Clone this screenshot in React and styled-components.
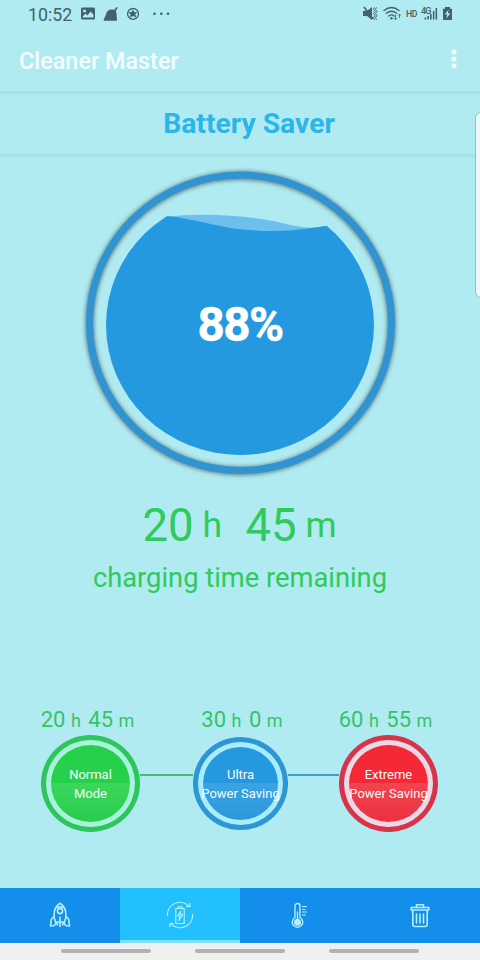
import React from "react";
import styled, { createGlobalStyle } from "styled-components";

const GlobalStyle = createGlobalStyle`
  * { box-sizing: border-box; }
  html, body { margin: 0; padding: 0; background: #b0ebf2; }
  body { font-family: Roboto, "Liberation Sans", sans-serif; }
  svg { display: block; flex: none; }
`;

const Screen = styled.main`
  position: relative;
  width: 480px;
  height: 960px;
  overflow: hidden;
  display: flex;
  flex-direction: column;
  background: #b0ebf2;
`;

const StatusBar = styled.header`
  height: 28px;
  padding: 0 27px 0 28px;
  display: flex;
  align-items: center;
  justify-content: space-between;
  color: #42616a;
`;

const StatusGroup = styled.div`
  display: flex;
  align-items: center;
`;

const Clock = styled.span`
  width: 53px;
  padding-top: 1px;
  font-size: 17.8px;
  line-height: 28px;
`;

const AppBar = styled.div`
  height: 64px;
  padding: 0 21px 2px 19px;
  display: flex;
  align-items: center;
  justify-content: space-between;
  border-bottom: 1px solid #a6dee5;
  box-shadow: 0 1px 2px rgba(60, 120, 130, 0.15);
`;

const AppTitle = styled.h1`
  margin: 0;
  padding-top: 4px;
  font-size: 23.4px;
  font-weight: 500;
  line-height: 60px;
  color: #f4fdfe;
`;

const SectionBar = styled.div`
  height: 63px;
  padding-left: 18px;
  display: flex;
  align-items: center;
  justify-content: center;
  border-bottom: 1px solid #a6dee5;
  box-shadow: 0 1px 2px rgba(60, 120, 130, 0.15);
`;

const SectionTitle = styled.h2`
  margin: 0;
  padding-top: 1px;
  font-size: 28.3px;
  font-weight: 700;
  line-height: 61px;
  color: #2cb5e8;
`;

const EdgeHandle = styled.div`
  position: absolute;
  top: 112px;
  right: -8px;
  width: 13px;
  height: 186px;
  border: 1px solid #98bcc2;
  border-radius: 6px;
  background: #e9f9fc;
`;

const Gauge = styled.section`
  position: relative;
  height: 336px;
`;

const GaugeValue = styled.div`
  position: absolute;
  inset: 0 0 0 0;
  display: flex;
  justify-content: center;
  padding-top: 142px;
  font-size: 47.5px;
  font-weight: 700;
  line-height: 56px;
  letter-spacing: -1.5px;
  -webkit-text-stroke: 0.5px #fff;
  color: #fff;
`;

const Remaining = styled.section`
  height: 214px;
  display: flex;
  flex-direction: column;
  align-items: center;
  color: #2fca5b;
`;

const BigTime = styled.div`
  height: 68px;
  display: flex;
  align-items: center;
`;

const BigNumber = styled.span`
  width: ${(p) => p.$w}px;
  padding-top: 2px;
  font-size: 45.5px;
  line-height: 66px;
`;

const BigUnit = styled.span`
  width: ${(p) => p.$w}px;
  font-size: 35.5px;
  line-height: 68px;
`;

const Caption = styled.div`
  margin-top: 3px;
  font-size: 27.3px;
  line-height: 32px;
  white-space: nowrap;
`;

const Modes = styled.section`
  height: 183px;
  padding-left: 39px;
  display: flex;
  align-items: flex-start;
`;

const ModeItem = styled.div`
  width: ${(p) => p.$w}px;
  flex: none;
  display: flex;
  flex-direction: column;
  align-items: center;
`;

const ModeTime = styled.div`
  height: 30px;
  margin-left: ${(p) => p.$shift}px;
  display: flex;
  align-items: baseline;
  justify-content: center;
  font-size: 22px;
  line-height: 30px;
  white-space: nowrap;
  color: #35c464;
`;

const ModeUnit = styled.span`
  margin: 0 ${(p) => (p.$last ? 0 : 7.5)}px 0 5.5px;
  font-size: 18px;
`;

const Dial = styled.button`
  width: ${(p) => p.$w}px;
  height: ${(p) => p.$h}px;
  margin: ${(p) => p.$top}px 0 0;
  padding: 5px;
  border: 0;
  border-radius: 50%;
  background: ${(p) => p.$ring};
  font-family: inherit;
`;

const DialGap = styled.span`
  display: block;
  width: 100%;
  height: 100%;
  padding: 5px;
  border-radius: 50%;
  background: ${(p) => p.$gap};
`;

const DialFace = styled.span`
  width: 100%;
  height: 100%;
  display: flex;
  align-items: center;
  justify-content: center;
  border-radius: 50%;
  background: ${(p) => p.$face};
`;

const DialLabel = styled.span`
  flex: none;
  margin-top: 2px;
  color: #f4fdfa;
  font-size: 13px;
  line-height: 18.5px;
  text-align: center;
  white-space: nowrap;
`;

const Connector = styled.div`
  width: ${(p) => p.$w}px;
  height: 2px;
  flex: none;
  margin: 69px -2px 0;
  background: ${(p) => p.$color};
`;

const TabBar = styled.nav`
  height: 55px;
  display: grid;
  grid-template-columns: repeat(4, 1fr);
`;

const Tab = styled.button`
  padding: 2px 0 0;
  border: 0;
  border-bottom: 3px solid ${(p) => (p.$active ? "#79e1fb" : "#138eea")};
  background: ${(p) => (p.$active ? "#22c0fc" : "#138eea")};
  display: flex;
  align-items: center;
  justify-content: center;
  color: #b5f1f7;
`;

const SystemBar = styled.footer`
  height: 17px;
  padding: 6px 61px 0;
  display: flex;
  justify-content: space-between;
  background: #f0f0f0;
`;

const Pill = styled.span`
  width: 90px;
  height: 4px;
  border-radius: 2px;
  background: #b2b2b2;
`;

const LeftStatusIcons = () => (
  <svg width="92" height="20" viewBox="81 4 92 20" fill="#42616a">
    <path fillRule="evenodd" d="M82.500 7.500h11q1.500 0 1.500 1.500v9q0 1.500-1.500 1.500h-11q-1.500 0-1.500-1.500v-9q0-1.500 1.500-1.500zM82.700 17.500h10.800v-3l-3-3-3 4-2-2-2.800 3zM84.500 9.500a1.500 1.500 0 1 0 .1 0z" />
    <path d="M103.500 20.700q1.500-4.500 3-7.200h10l.5 7.200zM106 13.600q2-4.800 6.500-4.100l1.500.5 2.500-3 1.300.8-2 3 .6 2.800z" />
    <circle cx="133" cy="13.900" r="5.400" fill="none" stroke="#42616a" strokeWidth="1.300" />
    <path d="M133 9.500l1.200 2.800 3-.2-2 2.400 1.200 3.100-3.400-1.500-3.200 1.700.8-3.400-2.300-2.200 3.300-.2z" />
    <circle cx="154.500" cy="13.800" r="1.300" /><circle cx="161.300" cy="13.800" r="1.300" /><circle cx="168" cy="13.800" r="1.300" />
  </svg>
);

const StatusText = styled.text`
  font-family: Roboto, sans-serif;
  font-weight: 500;
  font-size: ${(p) => p.$size}px;
`;

const RightStatusIcons = () => (
  <svg width="91" height="20" viewBox="362 4 91 20" fill="#42616a">
    <path d="M363 11h4l5-4v13l-5-4h-4z" />
    <path d="M364 7l9 12" stroke="#42616a" strokeWidth="1.500" />
    <path d="M374.500 7.500l-1 2 1.500 2-1.500 2 1.500 2-1.500 2 1 2.200M376.500 7.500l-1 2 1.500 2-1.500 2 1.500 2-1.500 2 1 2.200" fill="none" stroke="#42616a" strokeWidth="1" />
    <g fill="none" stroke="#42616a" strokeWidth="1.400" strokeLinecap="round">
      <path d="M384 10.500q7.500-6 15 0M386.300 13.300q5.200-4.100 10.400 0M388.700 16q2.800-2.200 5.500 0" />
    </g>
    <circle cx="391.500" cy="18.300" r="1.200" />
    <path d="M395.500 14.500v5M393.800 18l1.700 1.800 1.700-1.800M399.500 18v-4M398.200 15.500l1.300-1.500 1.300 1.500" stroke="#42616a" fill="none" strokeWidth=".8" />
    <StatusText x="406" y="16.600" $size={8.7} textLength="11.500">HD</StatusText>
    <StatusText x="421" y="13.500" $size={9} textLength="10.500">4G</StatusText>
    <path d="M424.500 17.500h1.600v2h-1.600zM427.300 16h1.600v3.500h-1.600zM430 14h1.600v5.500h-1.600zM432.900 11h1.500v8.500h-1.500zM435.600 8h1.500v11.500h-1.500z" />
    <path fillRule="evenodd" d="M445 7h5v1.700h2V20h-9V8.700h2zM448.700 9.500l-4 5h2.500l-.8 4 4-5.300h-2.600z" />
  </svg>
);

const MoreIcon = () => (
  <svg width="10" height="22" viewBox="0 0 10 22" fill="#f4fdfe">
    <circle cx="5" cy="4" r="2.500" /><circle cx="5" cy="11" r="2.500" /><circle cx="5" cy="18" r="2.500" />
  </svg>
);

const GaugeArt = () => (
  <svg width="480" height="335" viewBox="0 155 480 335">
    <defs>
      <filter id="ringShade" x="-10%" y="-10%" width="120%" height="120%"><feGaussianBlur stdDeviation="1.900" /></filter>
      <clipPath id="fluid"><ellipse cx="240" cy="325" rx="134" ry="130" /></clipPath>
    </defs>
    <ellipse cx="240.500" cy="323.300" rx="151" ry="147.700" fill="none" stroke="#4d676b" strokeOpacity=".85" strokeWidth="8.500" filter="url(#ringShade)" />
    <ellipse cx="240.500" cy="322.800" rx="151" ry="147.700" fill="none" stroke="#3094d2" strokeWidth="7" />
    <g clipPath="url(#fluid)">
      <path d="M165 217C205 212 252 216 282 223S314 228 330 225V250H165z" fill="#6dc0ed" />
      <path d="M100 216H165C182 217 205 223 230 228C260 232 288 232 311 228L330 225.500H385V460H100z" fill="#2499df" />
    </g>
  </svg>
);

const RocketIcon = () => (
  <svg width="22" height="26" viewBox="0 0 22 26" fill="none" stroke="currentColor" strokeWidth="1.600" strokeLinejoin="round" strokeLinecap="round">
    <path d="M6.500 20C3.500 13 5 5 11 1.200C17 5 18.500 13 15.500 20zM7.500 5h7" />
    <circle cx="11" cy="9" r="2.600" />
    <path d="M5 14.500L2.300 17.500L1.500 24L5.500 23.500L7 20.500M17 14.500L19.700 17.500L20.500 24L16.500 23.500L15 20.500M11 15v9.500M8.300 21v2M13.700 21v2" />
  </svg>
);

const BatteryCycleIcon = () => (
  <svg width="28" height="28" viewBox="0 0 28 28" fill="none" stroke="currentColor" strokeWidth="1.150" strokeLinejoin="round">
    <path d="M1.500 15A12.500 12.500 0 0 1 22.800 5M26.500 13A12.500 12.500 0 0 1 5.200 23" />
    <path d="M20 5.300l4 .3V2M8 22.700l-4-.3V26" />
    <path d="M9.800 7.500h8.400v15H9.800zM12 7.500V5.700h4v1.800M14.800 10l-3 5h2l-.8 4.500 3.500-6h-2.300z" />
  </svg>
);

const ThermometerIcon = () => (
  <svg width="18" height="27" viewBox="1 0 18 27" fill="none" stroke="currentColor" strokeWidth="1.400" strokeLinecap="round">
    <path d="M5 15.500V4a2.500 2.500 0 0 1 5 0v11.500a5.200 5.200 0 1 1-5 0z" />
    <circle cx="7.500" cy="20.200" r="3.500" fill="currentColor" stroke="none" />
    <path d="M7.500 20V10" />
    <path d="M12.500 4.500h4M12.500 7.300h2.500M12.500 10h4M12.500 13h3" strokeWidth="1" />
  </svg>
);

const TrashIcon = () => (
  <svg width="20" height="25" viewBox="0 0 20 25" fill="none" stroke="currentColor" strokeWidth="1.600" strokeLinejoin="round" strokeLinecap="round">
    <path d="M1.200 4.500h17.600v2.500h-17.600zM6.500 4.300V1.800h7v2.500M2.800 7v14.500q0 2 2 2h10.400q2 0 2-2V7" />
    <path d="M6.500 11v9M10 11v9M13.500 11v9" />
  </svg>
);

const modes = [
  {
    h: "20", m: "45", label: ["Normal", "Mode"], w: 99, height: 97, slot: 103, top: 0, shift: -6,
    ring: "#2ec55d", gap: "#a8f3dc",
    face: "linear-gradient(#27d04b 49%, #3bd65c 50%, #28cd4e)", line: "#45bd79", lineW: 53,
  },
  {
    h: "30", m: "0", label: ["Ultra", "Power Saving"], w: 95, height: 93, slot: 99, top: 2, shift: 3,
    ring: "#2c96d6", gap: "#a9edfa",
    face: "linear-gradient(#2499df 49%, #3ba3e1 50%, #2a98db)", line: "#3f9fca", lineW: 51,
  },
  {
    h: "60", m: "55", label: ["Extreme", "Power Saving"], w: 99, height: 97, slot: 103, top: 0, shift: -6,
    ring: "#d83449", gap: "#ecd9e7",
    face: "linear-gradient(#f52838 49%, #f04450 50%, #ec303f)",
  },
];

const tabs = [RocketIcon, BatteryCycleIcon, ThermometerIcon, TrashIcon];

export default function App() {
  return (
    <>
      <GlobalStyle />
      <Screen>
        <StatusBar>
          <StatusGroup><Clock>10:52</Clock><LeftStatusIcons /></StatusGroup>
          <RightStatusIcons />
        </StatusBar>
        <AppBar><AppTitle>Cleaner Master</AppTitle><MoreIcon /></AppBar>
        <SectionBar><SectionTitle>Battery Saver</SectionTitle></SectionBar>
        <Gauge>
          <GaugeArt />
          <GaugeValue>88%</GaugeValue>
        </Gauge>
        <Remaining>
          <BigTime>
            <BigNumber $w={60}>20</BigNumber>
            <BigUnit $w={43}>h</BigUnit>
            <BigNumber $w={60}>45</BigNumber>
            <BigUnit $w={32}>m</BigUnit>
          </BigTime>
          <Caption>charging time remaining</Caption>
        </Remaining>
        <Modes>
          {modes.map((mode) => (
            <React.Fragment key={mode.h}>
              <ModeItem $w={mode.slot}>
                <ModeTime $shift={mode.shift}>
                  {mode.h}<ModeUnit>h</ModeUnit>{mode.m}<ModeUnit $last>m</ModeUnit>
                </ModeTime>
                <Dial $w={mode.w} $h={mode.height} $top={mode.top} $ring={mode.ring}>
                  <DialGap $gap={mode.gap}>
                    <DialFace $face={mode.face}>
                      <DialLabel>{mode.label[0]}<br />{mode.label[1]}</DialLabel>
                    </DialFace>
                  </DialGap>
                </Dial>
              </ModeItem>
              {mode.line && <Connector $color={mode.line} $w={mode.lineW} />}
            </React.Fragment>
          ))}
        </Modes>
        <TabBar>
          {tabs.map((Icon, i) => <Tab key={i} $active={i === 1}><Icon /></Tab>)}
        </TabBar>
        <SystemBar><Pill /><Pill /><Pill /></SystemBar>
        <EdgeHandle />
      </Screen>
    </>
  );
}
